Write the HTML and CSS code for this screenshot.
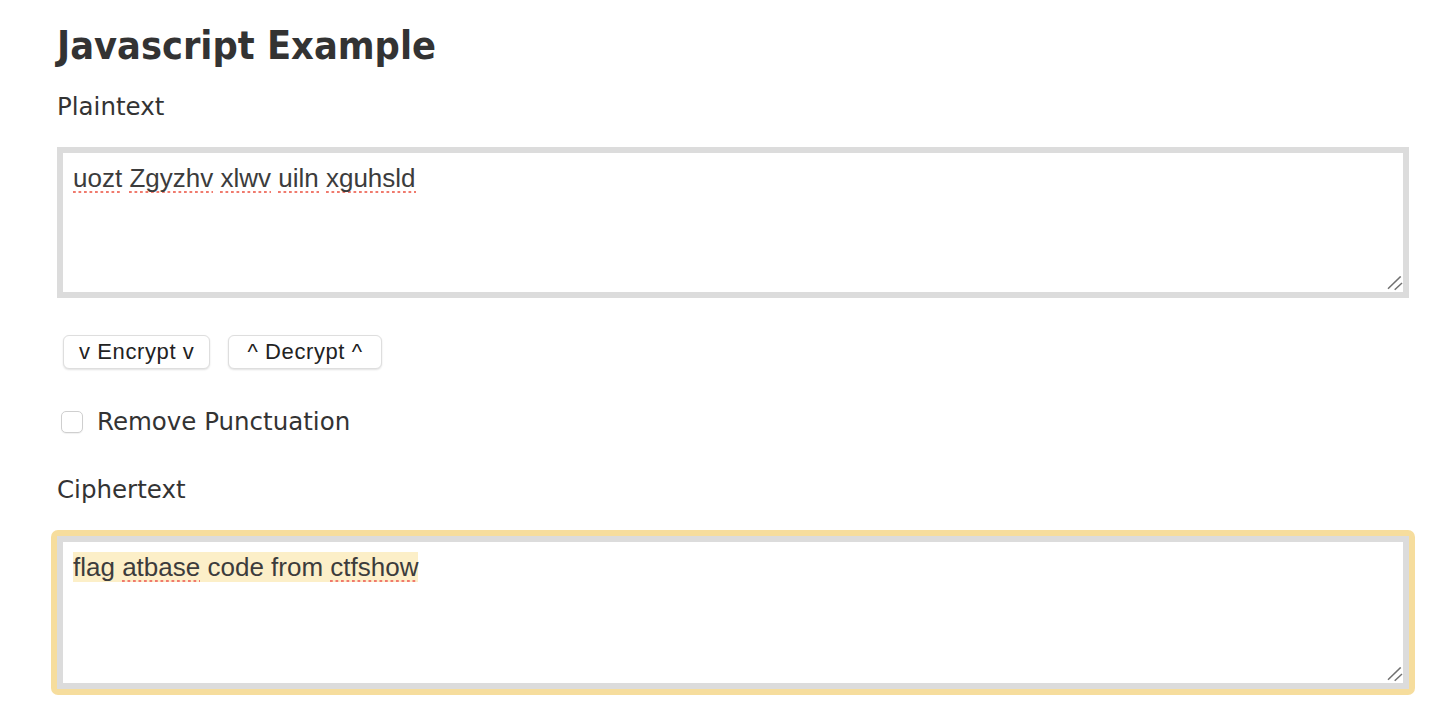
FILE: index.html
```html
<!DOCTYPE html>
<html lang="en">
<head>
<meta charset="utf-8">
<title>Javascript Example</title>
<link rel="stylesheet" href="styles.css">
</head>
<body>
<div class="page">
  <h1 class="title">Javascript Example</h1>
  <div class="label">Plaintext</div>
  <div class="box">
    <div class="box-text"><span class="sp">uozt</span> <span class="sp">Zgyzhv</span> <span class="sp">xlwv</span> <span class="sp">uiln</span> <span class="sp">xguhsld</span></div>
    <svg class="grip" width="16" height="16" viewBox="0 0 16 16"><line x1="1" y1="12.7" x2="13.7" y2="0.4"/><line x1="7.7" y1="13.7" x2="15" y2="7"/></svg>
  </div>
  <div class="buttons">
    <button class="btn">v Encrypt v</button>
    <button class="btn btn-wide">^ Decrypt ^</button>
  </div>
  <label class="check"><input type="checkbox" class="cb"><span class="check-text">Remove Punctuation</span></label>
  <div class="label label-cipher">Ciphertext</div>
  <div class="focus">
    <div class="box box-cipher">
      <div class="box-text"><span class="hl">flag <span class="sp">atbase</span> code from <span class="sp">ctfshow</span></span></div>
      <svg class="grip" width="16" height="16" viewBox="0 0 16 16"><line x1="1" y1="12.7" x2="13.7" y2="0.4"/><line x1="7.7" y1="13.7" x2="15" y2="7"/></svg>
    </div>
  </div>
</div>
</body>
</html>
```
FILE: styles.css
```css
html, body {
  margin: 0;
  padding: 0;
  background: #fff;
}
.page {
  padding: 22px 0 0 57px;
  width: 1352px;
  color: #333;
  font-family: "DejaVu Sans", sans-serif;
}
.title {
  margin: 0;
  font-family: "DejaVu Sans Condensed", "DejaVu Sans", sans-serif;
  font-stretch: condensed;
  font-weight: bold;
  font-size: 39.3px;
  line-height: 48px;
  color: #333;
}
.label {
  margin-top: 21.5px;
  font-size: 24.5px;
  line-height: 30px;
  color: #333;
}
.label-cipher {
  margin-top: 37.5px;
}
.box {
  position: relative;
  box-sizing: border-box;
  margin-top: 25.5px;
  width: 1352px;
  height: 151px;
  border: 6px solid #dcdcdc;
  background: #fff;
  padding: 10px 10px;
  font-family: "Liberation Sans", Arial, sans-serif;
  font-size: 26px;
  line-height: 30px;
  color: #3c3c3c;
}
.box-cipher {
  margin-top: 0;
  height: 153px;
}
.sp {
  background-image: linear-gradient(to right, #f07a6d 0, #f07a6d 2.5px, transparent 2.5px);
  background-size: 5.5px 2px;
  background-repeat: repeat-x;
  background-position: 0 100%;
}
.hl {
  background-color: #fcefc8;
}
.grip {
  position: absolute;
  right: 0;
  bottom: 0;
  stroke: #707070;
  stroke-width: 1.5;
}
.buttons {
  display: flex;
  gap: 18px;
  margin: 37px 0 0 6px;
}
.btn {
  box-sizing: border-box;
  height: 34px;
  padding: 0 15px;
  border: 1px solid #dedede;
  border-radius: 6px;
  background: #fff;
  box-shadow: 0 1px 2px rgba(0, 0, 0, 0.12);
  font-family: "Liberation Sans", Arial, sans-serif;
  font-size: 22px;
  letter-spacing: 0.6px;
  line-height: 32px;
  color: #222;
}
.btn-wide {
  padding: 0 18px;
}
.check {
  display: flex;
  align-items: center;
  gap: 14px;
  height: 30px;
  margin: 38px 0 0 4px;
}
.cb {
  appearance: none;
  -webkit-appearance: none;
  box-sizing: border-box;
  margin: 0;
  width: 22px;
  height: 22px;
  border: 1px solid #cfcfcf;
  border-radius: 5px;
  background: #fff;
  box-shadow: 0 1px 1px rgba(0, 0, 0, 0.06);
}
.check-text {
  font-size: 24.5px;
  line-height: 30px;
  color: #333;
}
.focus {
  margin: 25.5px 0 0 -6px;
  width: 1364px;
  padding: 6px;
  box-sizing: border-box;
  background: #f6dd9d;
  border-radius: 7px;
}
```
